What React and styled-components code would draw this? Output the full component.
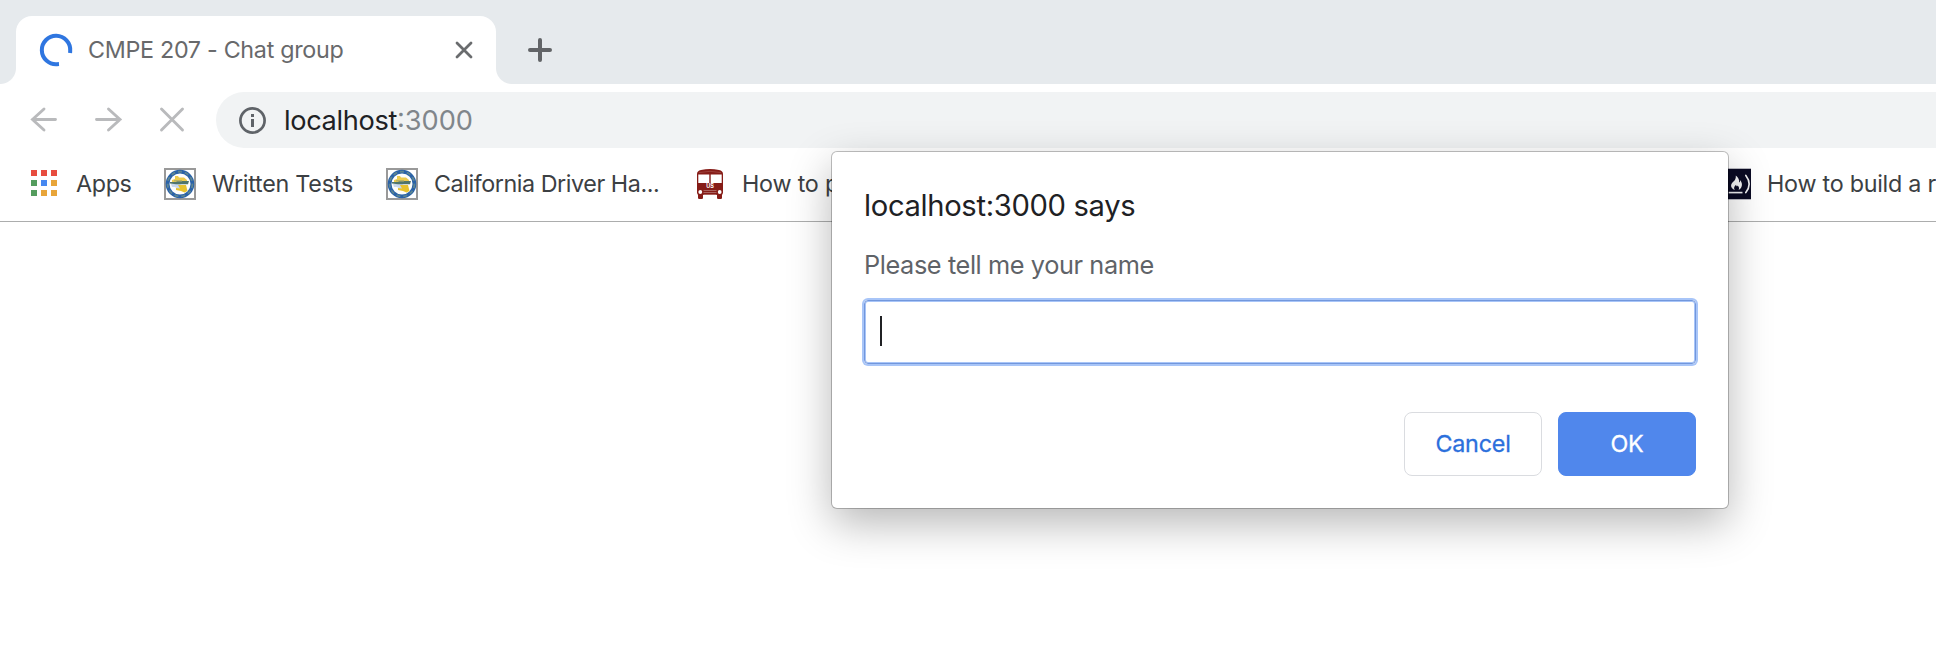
import React from "react";
import styled, { createGlobalStyle } from "styled-components";

const GlobalStyle = createGlobalStyle`
  * { box-sizing: border-box; }
  body {
    margin: 0;
    background: #fff;
    overflow: hidden;
    font-family: Inter, "Liberation Sans", sans-serif;
  }
`;

const Window = styled.div`
  position: relative;
  width: 100%;
  height: 652px;
  overflow: hidden;
  background: #fff;
`;

const Label = styled.span`
  padding-bottom: ${(p) => p.$lift || 0}px;
  font-size: ${(p) => p.$size || 23.3}px;
  font-weight: 400;
  letter-spacing: ${(p) => p.$track || 0}px;
  color: ${(p) => p.$color || "#3c4043"};
  white-space: pre;
`;

/* Tab strip */
const TabStrip = styled.div`
  display: flex;
  align-items: flex-end;
  height: 84px;
  background: #e6eaed;
`;

const Flare = styled.div`
  width: 16px;
  height: 16px;
  background: radial-gradient(circle at ${(p) => p.$corner}, transparent 15.5px, #fff 16.5px);
`;

const Tab = styled.div`
  display: flex;
  align-items: center;
  width: 480px;
  height: 68px;
  padding: 0 22px 0 23px;
  border-radius: 16px 16px 0 0;
  background: #fff;
`;

const TabTitle = styled(Label)`
  flex: 1;
  margin-left: 15px;
`;

const NewTab = styled.div`
  display: flex;
  margin: 0 0 20px 14px;
`;

/* Address row */
const Toolbar = styled.div`
  display: flex;
  align-items: center;
  height: 72px;
  padding-left: 28px;
`;

const NavButton = styled.div`
  display: flex;
  width: 64px;
`;

const AddressBar = styled.div`
  display: flex;
  align-items: center;
  flex: 1;
  height: 56px;
  margin-left: -4px;
  padding-left: 20px;
  border-radius: 28px 0 0 28px;
  background: #f1f3f4;
`;

const Url = styled.div`
  display: flex;
  margin-left: 14px;
`;

/* Bookmarks */
const BookmarksBar = styled.div`
  display: flex;
  align-items: center;
  height: 66px;
  padding: 0 0 9px 28px;
  border-bottom: 1px solid #acadad;
`;

const Bookmark = styled.div`
  display: flex;
  align-items: center;
  flex: none;
  gap: 16px;
  width: ${(p) => p.$width}px;
`;

/* Prompt dialog */
const Dialog = styled.div`
  position: absolute;
  top: 152px;
  left: 832px;
  display: flex;
  flex-direction: column;
  width: 896px;
  height: 356px;
  padding: 34px 32px 32px;
  border-radius: 5px;
  background: #fff;
  box-shadow: 0 0 0 1px rgba(0, 0, 0, 0.24), 0 15px 44px rgba(0, 0, 0, 0.29);
`;

const DialogTitle = styled(Label)`
  line-height: 40px;
`;

const DialogMessage = styled(Label)`
  margin-top: 22px;
  line-height: 34px;
`;

const PromptInput = styled.div`
  display: flex;
  align-items: center;
  height: 64px;
  margin-top: 18px;
  padding-left: 15px;
  border: 1px solid #7297dc;
  border-radius: 4px;
  box-shadow: 0 0 0 2px #a8c5f8, inset 0 0 0 1px #a8c5f8;
`;

const Caret = styled.div`
  width: 2px;
  height: 30px;
  margin-top: -2px;
  background: #202124;
`;

const Actions = styled.div`
  display: flex;
  justify-content: flex-end;
  gap: 16px;
  margin-top: auto;
`;

const Button = styled.div`
  display: flex;
  align-items: center;
  justify-content: center;
  width: 138px;
  height: 64px;
  border: 1px solid ${(p) => (p.$primary ? "#5087ec" : "#dadce0")};
  border-radius: 8px;
  background: ${(p) => (p.$primary ? "#5087ec" : "#fff")};
`;

const ButtonLabel = styled(Label)`
  -webkit-text-stroke: 0.3px currentColor;
`;

function Spinner() {
  return (
    <svg width="34" height="34" viewBox="0 0 34 34">
      <path d="M31.2 18A14.2 14.2 0 1 0 18 31.2" fill="none" stroke="#2f76e0" strokeWidth="4" strokeLinecap="square" />
    </svg>
  );
}

function CloseIcon() {
  return (
    <svg width="20" height="20" viewBox="0 0 20 20">
      <path d="M3 3L17 17M17 3L3 17" stroke="#6a6c6e" strokeWidth="2.8" strokeLinecap="round" />
    </svg>
  );
}

function PlusIcon() {
  return (
    <svg width="28" height="28" viewBox="0 0 28 28">
      <path d="M14 4V24M4 14H24" stroke="#626467" strokeWidth="4" strokeLinecap="round" />
    </svg>
  );
}

function NavIcon({ d }) {
  return (
    <svg width="32" height="32" viewBox="0 0 32 32">
      <path d={d} fill="none" stroke="#b9babc" strokeWidth="2.9" strokeLinecap="round" />
    </svg>
  );
}

function InfoIcon() {
  return (
    <svg width="34" height="34" viewBox="0 0 34 34">
      <circle cx="16.5" cy="17.5" r="12.1" fill="none" stroke="#5f6368" strokeWidth="2.7" />
      <path d="M15 11h3v3h-3zM15 16h3v8h-3z" fill="#5f6368" />
    </svg>
  );
}

const appColors = ["#e74c3f", "#e74c3f", "#e74c3f", "#549c5e", "#4688f1", "#e8a53a", "#549c5e", "#e8a53a", "#e8a53a"];

function AppsIcon() {
  return (
    <svg width="32" height="32" viewBox="0 0 32 32">
      {appColors.map((c, i) => (
        <rect key={i} x={3 + (i % 3) * 10} y={2 + Math.floor(i / 3) * 10} width="6" height="6" fill={c} />
      ))}
    </svg>
  );
}

function SealIcon() {
  return (
    <svg width="32" height="32" viewBox="0 0 32 32">
      <rect x="1" y="1" width="30" height="30" fill="#fff" stroke="#999" strokeWidth="2" />
      <circle cx="16" cy="16" r="12.4" fill="#fdfdfb" stroke="#2a62a8" strokeWidth="3.8" />
      <circle cx="16" cy="16" r="12.4" fill="none" stroke="#5d8590" strokeWidth="1.8" strokeDasharray="4 3" />
      <path d="M7 16h9l5 3v4l-5-1-5-3H8z" fill="#c9d8ee" />
      <path d="M11 8h3l1 1.500h5l3 2.500v2H8v-2l3-1z" fill="#eccb4e" />
      <path d="M14 17l8 0 1.500 6-3 1.500-3.500-1.500-5-1v-2l4 .5z" fill="#e7c22e" />
      <path d="M6 14h6l1-1h12l-1 3.200H12l-6-.800z" fill="#50756c" />
      <path d="M10 12h8v1.500h-8z" fill="#b7b166" />
    </svg>
  );
}

function BusIcon() {
  return (
    <svg width="32" height="32" viewBox="0 0 32 32">
      <path d="M3 25V6Q3 2.800 7 2Q16 0 25 2Q29 2.800 29 6V25L28 27V30.500Q25.500 31.500 23 30.500V27H9V30.500Q6.500 31.500 4 30.500V27Z" fill="#861c17" />
      <path d="M5 4.600Q16 2 27 4.600" fill="none" stroke="#a5504b" strokeWidth="0.700" />
      <path d="M4.300 6.600H15.300V15H4.300zM16.700 6.600H27.700V15H16.700z" fill="#fff" />
      <circle cx="6.300" cy="24" r="1.900" fill="#fff" />
      <circle cx="25.700" cy="24" r="1.900" fill="#fff" />
      <path d="M9.500 22.500H22.500M9.500 24.500H22.500M9.500 26.500H22.500" stroke="#b57672" strokeWidth="0.800" />
      <text x="16" y="20.300" textAnchor="middle" fontSize="5.500" fontWeight="700" fontFamily="Inter, sans-serif" fill="#fff">US</text>
    </svg>
  );
}

function CampIcon() {
  return (
    <svg width="32" height="32" viewBox="0 0 32 32">
      <rect width="32" height="32" fill="#0a0a23" />
      <path d="M6 7Q1 16 6 25M26 7Q33 16 26 25" fill="none" stroke="#f1f1f3" strokeWidth="1.700" strokeLinecap="round" />
      <path d="M15.500 7C18 9 19.500 11.500 19 14.500C20.300 14 20 12.600 19.800 11.800C22.500 14.500 23.300 19.500 18.500 22.300C19.500 20 18.500 18.500 17.300 17.500C17 19 16 18.500 15.800 16.800C13.800 18.500 13 20.500 14.500 22.300C9.500 20.500 9.800 16.500 12.500 14C14.800 11.800 15.800 10 15.500 7Z" fill="#f5f5f6" />
      <path d="M8 25H22.500" stroke="#f1f1f3" strokeWidth="1.700" />
    </svg>
  );
}

const bookmarks = [
  { text: "Apps", icon: AppsIcon, width: 136, track: -0.35 },
  { text: "Written Tests", icon: SealIcon, width: 222, track: -0.24 },
  { text: "California Driver Ha...", icon: SealIcon, width: 308, track: -0.43 },
  { text: "How to p", icon: BusIcon, width: 1026.5, track: -0.2 },
  { text: "How to build a r", icon: CampIcon, width: 215.5, track: -0.25 },
];

export default function App() {
  return (
    <Window>
      <GlobalStyle />
      <TabStrip>
        <Flare $corner="0 0" />
        <Tab>
          <Spinner />
          <TabTitle $color="#68696b" $track={-0.3} $lift={2}>CMPE 207 - Chat group</TabTitle>
          <CloseIcon />
        </Tab>
        <Flare $corner="100% 0" />
        <NewTab>
          <PlusIcon />
        </NewTab>
      </TabStrip>
      <Toolbar>
        <NavButton>
          <NavIcon d="M16 5L4.500 15.500L16 26M4.500 15.500H27.500" />
        </NavButton>
        <NavButton>
          <NavIcon d="M16.500 5L28 15.500L16.500 26M28 15.500H4.500" />
        </NavButton>
        <NavButton>
          <NavIcon d="M5.500 5L26.500 26M26.500 5L5.500 26" />
        </NavButton>
        <AddressBar>
          <InfoIcon />
          <Url>
            <Label $size={27.2} $track={-0.36} $color="#202124">localhost</Label>
            <Label $size={27.2} $color="#80868b">:3000</Label>
          </Url>
        </AddressBar>
      </Toolbar>
      <BookmarksBar>
        {bookmarks.map(({ text, icon: Icon, width, track }) => (
          <Bookmark key={text} $width={width}>
            <Icon />
            <Label $track={track} $lift={2}>{text}</Label>
          </Bookmark>
        ))}
      </BookmarksBar>
      <Dialog>
        <DialogTitle $size={29.2} $track={-0.34} $color="#202124">localhost:3000 says</DialogTitle>
        <DialogMessage $size={25.3} $track={-0.4} $color="#5f6368">Please tell me your name</DialogMessage>
        <PromptInput>
          <Caret />
        </PromptInput>
        <Actions>
          <Button>
            <ButtonLabel $track={-0.2} $lift={2} $color="#2b6fdc">Cancel</ButtonLabel>
          </Button>
          <Button $primary>
            <ButtonLabel $track={-0.2} $lift={2} $color="#fff">OK</ButtonLabel>
          </Button>
        </Actions>
      </Dialog>
    </Window>
  );
}
